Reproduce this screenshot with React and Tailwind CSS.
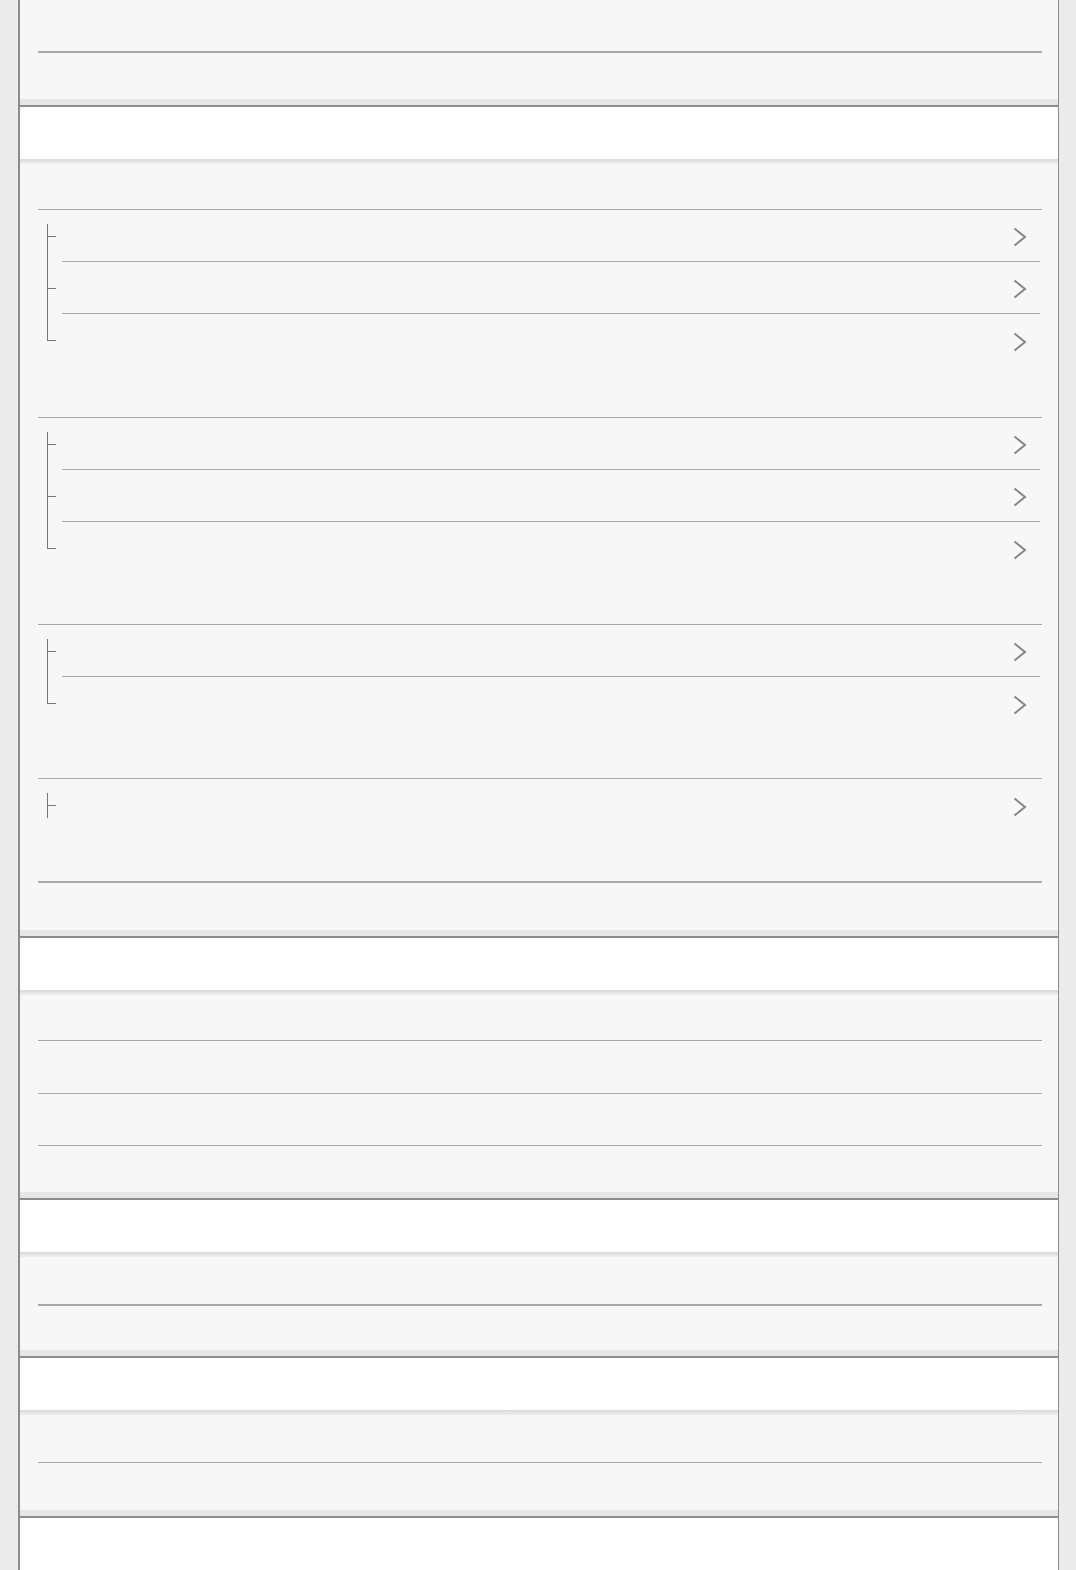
import React from "react";

const FullLine = ({ h = 1 }) => (
  <div className={`ml-[18px] mr-[16px] bg-[#a9a9a9] ${h === 2 ? "h-[2px]" : "h-px"}`} />
);

const TopStrip = () => (
  <div className="h-[5px] bg-gradient-to-b from-[#dadada] to-[#efefef]" />
);
const BottomStrip = () => <div className="h-[6px] bg-[#e6e6e6]" />;

const Header = ({ h = "h-[54px]" }) => (
  <div className={`border-t-2 border-[#8c8c8c] bg-white ${h}`} />
);

const Chevron = () => (
  <svg width="14" height="20" viewBox="0 0 14 20" className="block">
    <polyline
      points="1.5,1.5 12,10 1.5,18.5"
      fill="none"
      stroke="#858585"
      strokeWidth="2"
    />
  </svg>
);

// kind: first | mid | last | single
const Tree = ({ kind }) => {
  let y1 = 0;
  let y2 = 52;
  if (kind === "first") y1 = 14;
  if (kind === "last") y2 = 27;
  if (kind === "single") {
    y1 = 14;
    y2 = 39;
  }
  return (
    <svg width="42" height="52" viewBox="0 0 42 52" className="block shrink-0">
      <line x1="27.5" y1={y1} x2="27.5" y2={y2} stroke="#777777" strokeWidth="1" />
      <line x1="27" y1="26.5" x2="36" y2="26.5" stroke="#777777" strokeWidth="1" />
    </svg>
  );
};

const ItemRow = ({ kind, border }) => (
  <div className="flex h-[52px]">
    <Tree kind={kind} />
    <div
      className={`mr-[18px] flex flex-1 items-center justify-end pr-[13px] pt-[3px] ${
        border ? "border-b border-[#a9a9a9]" : ""
      }`}
    >
      <Chevron />
    </div>
  </div>
);

const Group = ({ count, tail }) => {
  const rows = [];
  for (let i = 0; i < count; i++) {
    let kind = "mid";
    if (count === 1) kind = "single";
    else if (i === 0) kind = "first";
    else if (i === count - 1) kind = "last";
    rows.push(<ItemRow key={i} kind={kind} border={i < count - 1} />);
  }
  return (
    <div>
      {rows}
      <div className={tail} />
    </div>
  );
};

export default function App() {
  return (
    <div className="min-h-[1570px] w-full bg-[#ebebeb] font-['Liberation_Sans',sans-serif]">
      <div className="ml-[18px] w-[1041px] overflow-hidden border-l-2 border-r border-[#8c8c8c] h-[1570px]">
        {/* Section 1 body (top cut) */}
        <div className="bg-[#f7f7f7]">
          <div className="h-[51px]" />
          <FullLine h={2} />
          <div className="h-[46px]" />
          <BottomStrip />
        </div>

        <Header />

        {/* Section 2 body with tree groups */}
        <div className="bg-[#f7f7f7]">
          <TopStrip />
          <div className="h-[45px]" />
          <FullLine />
          <Group count={3} tail="h-[51px]" />
          <FullLine />
          <Group count={3} tail="h-[50px]" />
          <FullLine />
          <Group count={2} tail="h-[49px]" />
          <FullLine />
          <Group count={1} tail="h-[50px]" />
          <FullLine h={2} />
          <div className="h-[47px]" />
          <BottomStrip />
        </div>

        <Header />

        {/* Section 3 */}
        <div className="bg-[#f7f7f7]">
          <TopStrip />
          <div className="h-[45px]" />
          <FullLine />
          <div className="h-[52px]" />
          <FullLine />
          <div className="h-[51px]" />
          <FullLine />
          <div className="h-[46px]" />
          <BottomStrip />
        </div>

        <Header />

        {/* Section 4 */}
        <div className="bg-[#f7f7f7]">
          <TopStrip />
          <div className="h-[47px]" />
          <FullLine h={2} />
          <div className="h-[44px]" />
          <BottomStrip />
        </div>

        <Header />

        {/* Section 5 */}
        <div className="bg-[#f7f7f7]">
          <TopStrip />
          <div className="h-[47px]" />
          <FullLine />
          <div className="h-[47px]" />
          <BottomStrip />
        </div>

        <Header h="h-[60px]" />
      </div>
    </div>
  );
}
